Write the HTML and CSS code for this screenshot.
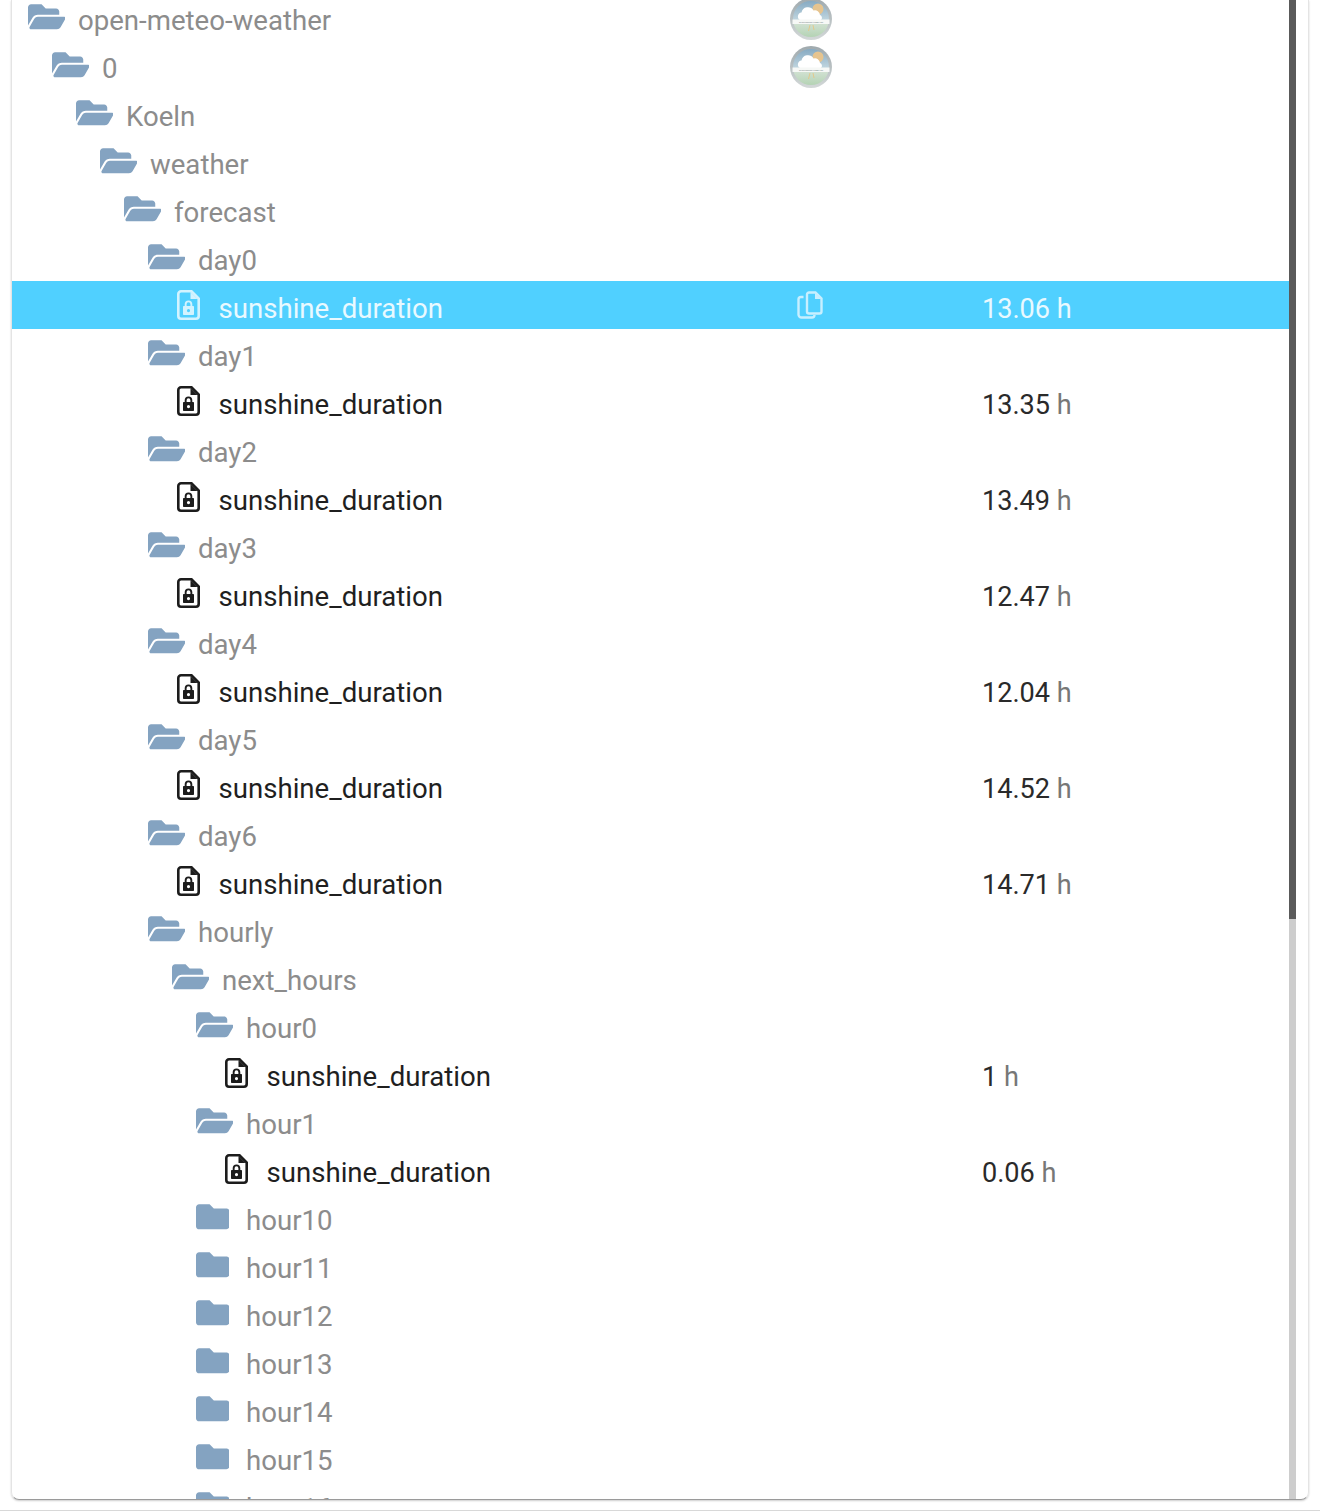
FILE: index.html

```html
<!DOCTYPE html>
<html lang="en">
<head>
  <meta charset="UTF-8" />
  <title>open-meteo-weather</title>
  <link rel="stylesheet" href="styles.css">
</head>
<body>
  <svg class="defs" width="0" height="0">
    <symbol id="folderOpen" viewBox="0 0 576 512">
      <path d="M572.694 292.093L500.27 416.248A63.997 63.997 0 0 1 444.989 448H45.025c-18.523 0-30.064-20.093-20.731-36.093l72.424-124.155A64 64 0 0 1 152 256h399.964c18.523 0 30.064 20.093 20.73 36.093zM152 224h328v-48c0-26.51-21.49-48-48-48H272l-64-64H48C21.49 64 0 85.49 0 112v278.046l69.077-118.418C86.214 242.25 117.989 224 152 224z"/>
    </symbol>
    <symbol id="folder" viewBox="0 0 512 512">
      <path d="M464 128H272l-64-64H48C21.49 64 0 85.49 0 112v288c0 26.51 21.49 48 48 48h416c26.51 0 48-21.49 48-48V176c0-26.51-21.49-48-48-48z"/>
    </symbol>
    <symbol id="fileLock" viewBox="0 0 23 30">
      <path d="M4 1.300h10.500L21.700 8.500V26a2.700 2.700 0 0 1-2.700 2.700H4A2.700 2.700 0 0 1 1.300 26V4A2.700 2.700 0 0 1 4 1.300z" fill="none" stroke="currentColor" stroke-width="2.600"/>
      <path d="M13.500 2v7h7z"/>
      <path fill-rule="evenodd" d="M7.700 16v-1.800a3.800 3.800 0 0 1 7.600 0V16h.7c.6 0 1 .4 1 1v7c0 .6-.4 1-1 1H7c-.6 0-1-.4-1-1v-7c0-.6.4-1 1-1zm1.900 0h3.800v-1.800a1.900 1.900 0 0 0-3.800 0zm1.900 3a1.600 1.600 0 1 0 0 3.200 1.600 1.600 0 0 0 0-3.200z"/>
    </symbol>
    <symbol id="copy" viewBox="0 0 26 28">
      <path d="M12 1.500h6.500l6 6v13a2 2 0 0 1-2 2H12a2 2 0 0 1-2-2v-17a2 2 0 0 1 2-2z" fill="none" stroke="currentColor" stroke-width="2.400"/>
      <path d="M18 2v6h6z"/>
      <path d="M6.500 6H4a2.500 2.500 0 0 0-2.500 2.500v15A3 3 0 0 0 4.500 26.500H15a2.500 2.500 0 0 0 2.500-2.500" fill="none" stroke="currentColor" stroke-width="2.400"/>
    </symbol>
    <symbol id="meteoLogo" viewBox="0 0 42 42">
      <defs>
        <linearGradient id="logoBg" x1="0" y1="0" x2="0" y2="1">
          <stop offset="0" stop-color="#86aac2"/>
          <stop offset="0.5" stop-color="#bdd3dd"/>
          <stop offset="0.65" stop-color="#cfe0d0"/>
          <stop offset="1" stop-color="#b4d3b4"/>
        </linearGradient>
        <linearGradient id="logoRim" x1="0" y1="0" x2="0" y2="1">
          <stop offset="0" stop-color="#9fa9ad"/>
          <stop offset="1" stop-color="#d3d8d8"/>
        </linearGradient>
      </defs>
      <circle cx="21" cy="21" r="21" fill="url(#logoRim)"/>
      <circle cx="21" cy="21" r="18" fill="url(#logoBg)"/>
      <circle cx="28" cy="11" r="5.500" fill="#e6c48f"/>
      <path d="M10 22a4 4 0 0 1 1.500-7.500 6.500 6.500 0 0 1 12-2 5 5 0 0 1 6.500 4.500 3 3 0 0 1 1 5z" fill="#fff"/>
      <rect x="2.500" y="21.500" width="37" height="4.500" fill="#f6f8f6"/>
      <text class="logo-text" x="21" y="25">OPEN-METEO WEATHER</text>
      <path d="M20 27l-1.500 6M23 27l1 5" stroke="#e3c98c" stroke-width="1"/>
    </symbol>
  </svg>

  <div class="panel">
    <div class="tree">
      <div class="row d0"><div class="name"><svg class="ico-open"><use href="#folderOpen"/></svg><span class="label">open-meteo-weather</span></div><div class="mid"><svg class="logo"><use href="#meteoLogo"/></svg></div></div>
      <div class="row d1"><div class="name"><svg class="ico-open"><use href="#folderOpen"/></svg><span class="label">0</span></div><div class="mid"><svg class="logo"><use href="#meteoLogo"/></svg></div></div>
      <div class="row d2"><div class="name"><svg class="ico-open"><use href="#folderOpen"/></svg><span class="label">Koeln</span></div></div>
      <div class="row d3"><div class="name"><svg class="ico-open"><use href="#folderOpen"/></svg><span class="label">weather</span></div></div>
      <div class="row d4"><div class="name"><svg class="ico-open"><use href="#folderOpen"/></svg><span class="label">forecast</span></div></div>
      <div class="row d5"><div class="name"><svg class="ico-open"><use href="#folderOpen"/></svg><span class="label">day0</span></div></div>
      <div class="row d6 state selected"><div class="name"><svg class="ico-file"><use href="#fileLock"/></svg><span class="label">sunshine_duration</span></div><div class="mid"><svg class="ico-copy"><use href="#copy"/></svg></div><div class="val">13.06<span class="unit"> h</span></div></div>
      <div class="row d5"><div class="name"><svg class="ico-open"><use href="#folderOpen"/></svg><span class="label">day1</span></div></div>
      <div class="row d6 state"><div class="name"><svg class="ico-file"><use href="#fileLock"/></svg><span class="label">sunshine_duration</span></div><div class="mid"></div><div class="val">13.35<span class="unit"> h</span></div></div>
      <div class="row d5"><div class="name"><svg class="ico-open"><use href="#folderOpen"/></svg><span class="label">day2</span></div></div>
      <div class="row d6 state"><div class="name"><svg class="ico-file"><use href="#fileLock"/></svg><span class="label">sunshine_duration</span></div><div class="mid"></div><div class="val">13.49<span class="unit"> h</span></div></div>
      <div class="row d5"><div class="name"><svg class="ico-open"><use href="#folderOpen"/></svg><span class="label">day3</span></div></div>
      <div class="row d6 state"><div class="name"><svg class="ico-file"><use href="#fileLock"/></svg><span class="label">sunshine_duration</span></div><div class="mid"></div><div class="val">12.47<span class="unit"> h</span></div></div>
      <div class="row d5"><div class="name"><svg class="ico-open"><use href="#folderOpen"/></svg><span class="label">day4</span></div></div>
      <div class="row d6 state"><div class="name"><svg class="ico-file"><use href="#fileLock"/></svg><span class="label">sunshine_duration</span></div><div class="mid"></div><div class="val">12.04<span class="unit"> h</span></div></div>
      <div class="row d5"><div class="name"><svg class="ico-open"><use href="#folderOpen"/></svg><span class="label">day5</span></div></div>
      <div class="row d6 state"><div class="name"><svg class="ico-file"><use href="#fileLock"/></svg><span class="label">sunshine_duration</span></div><div class="mid"></div><div class="val">14.52<span class="unit"> h</span></div></div>
      <div class="row d5"><div class="name"><svg class="ico-open"><use href="#folderOpen"/></svg><span class="label">day6</span></div></div>
      <div class="row d6 state"><div class="name"><svg class="ico-file"><use href="#fileLock"/></svg><span class="label">sunshine_duration</span></div><div class="mid"></div><div class="val">14.71<span class="unit"> h</span></div></div>
      <div class="row d5"><div class="name"><svg class="ico-open"><use href="#folderOpen"/></svg><span class="label">hourly</span></div></div>
      <div class="row d6"><div class="name"><svg class="ico-open"><use href="#folderOpen"/></svg><span class="label">next_hours</span></div></div>
      <div class="row d7"><div class="name"><svg class="ico-open"><use href="#folderOpen"/></svg><span class="label">hour0</span></div></div>
      <div class="row d8 state"><div class="name"><svg class="ico-file"><use href="#fileLock"/></svg><span class="label">sunshine_duration</span></div><div class="mid"></div><div class="val">1<span class="unit"> h</span></div></div>
      <div class="row d7"><div class="name"><svg class="ico-open"><use href="#folderOpen"/></svg><span class="label">hour1</span></div></div>
      <div class="row d8 state"><div class="name"><svg class="ico-file"><use href="#fileLock"/></svg><span class="label">sunshine_duration</span></div><div class="mid"></div><div class="val">0.06<span class="unit"> h</span></div></div>
      <div class="row d7"><div class="name"><svg class="ico-closed"><use href="#folder"/></svg><span class="label">hour10</span></div></div>
      <div class="row d7"><div class="name"><svg class="ico-closed"><use href="#folder"/></svg><span class="label">hour11</span></div></div>
      <div class="row d7"><div class="name"><svg class="ico-closed"><use href="#folder"/></svg><span class="label">hour12</span></div></div>
      <div class="row d7"><div class="name"><svg class="ico-closed"><use href="#folder"/></svg><span class="label">hour13</span></div></div>
      <div class="row d7"><div class="name"><svg class="ico-closed"><use href="#folder"/></svg><span class="label">hour14</span></div></div>
      <div class="row d7"><div class="name"><svg class="ico-closed"><use href="#folder"/></svg><span class="label">hour15</span></div></div>
      <div class="row d7"><div class="name"><svg class="ico-closed"><use href="#folder"/></svg><span class="label">hour16</span></div></div>
    </div>
    <div class="scrollbar"><div class="thumb"></div></div>
  </div>
  <div class="footer"></div>
</body>
</html>
```

FILE: styles.css

```css
html, body { margin: 0; height: 1511px; overflow: hidden; background: #fff; }
body { font-family: Roboto, "Liberation Sans", sans-serif; font-size: 27.6px; }
.defs { position: absolute; }

.panel {
  display: flex;
  box-sizing: border-box;
  width: 1298px;
  height: 1500px;
  margin-left: 11px;
  border-left: 1px solid #e4e4e4;
  border-right: 1px solid #e4e4e4;
  border-bottom: 1px solid #9a9a9a;
  border-radius: 0 0 8px 8px;
  box-shadow: 0 1px 2px rgba(0,0,0,.2);
  overflow: hidden;
}
.tree { width: 1277px; flex: none; margin-top: -7px; }
.scrollbar { width: 7px; flex: none; background: #cdcdcd; }
.thumb { height: 919px; background: #5a5a5a; }

.row { display: flex; height: 48px; align-items: center; }
.name { display: flex; align-items: center; flex: none; width: 778px; box-sizing: border-box; }
.mid { display: flex; justify-content: center; align-items: center; width: 42px; flex: none; }
.val { margin-left: 150px; color: #2a2a2a; padding-top: 8px; font-size: 27.1px; }
.unit { color: #777; }
.label { color: #8c8c8c; padding-top: 6px; }

.d0 .name { padding-left: 15.500px; }
.d1 .name { padding-left: 39.500px; }
.d2 .name { padding-left: 63.500px; }
.d3 .name { padding-left: 87.500px; }
.d4 .name { padding-left: 111.500px; }
.d5 .name { padding-left: 135.500px; }
.d6 .name { padding-left: 159.500px; }
.d7 .name { padding-left: 183.500px; }
.d8 .name { padding-left: 207.500px; }

.ico-open { width: 37.500px; height: 33.500px; fill: #84a3c1; margin-right: 13px; flex: none; }
.ico-closed { width: 33.500px; height: 33.500px; fill: #84a3c1; margin-right: 17px; flex: none; }
.ico-file { width: 23px; height: 30px; margin-left: 5px; margin-right: 19px; fill: #1c1c1c; color: #1c1c1c; flex: none; }
.ico-copy { width: 26px; height: 28px; margin-left: -2px; fill: #c8efff; color: #c8efff; }
.logo { width: 42px; height: 42px; margin-top: 4px; flex: none; }
.logo-text { font-size: 2.2px; text-anchor: middle; fill: #7c8a8c; font-family: Roboto, sans-serif; }

.state .label { color: #1f1f1f; }
.selected { background: #50d0ff; }
.selected .label, .selected .val, .selected .unit { color: #e9f9ff; }
.selected .ico-file { fill: #d3f3ff; color: #d3f3ff; }

.footer { height: 1px; margin-top: 10px; background: #d8d8d8; }
```
